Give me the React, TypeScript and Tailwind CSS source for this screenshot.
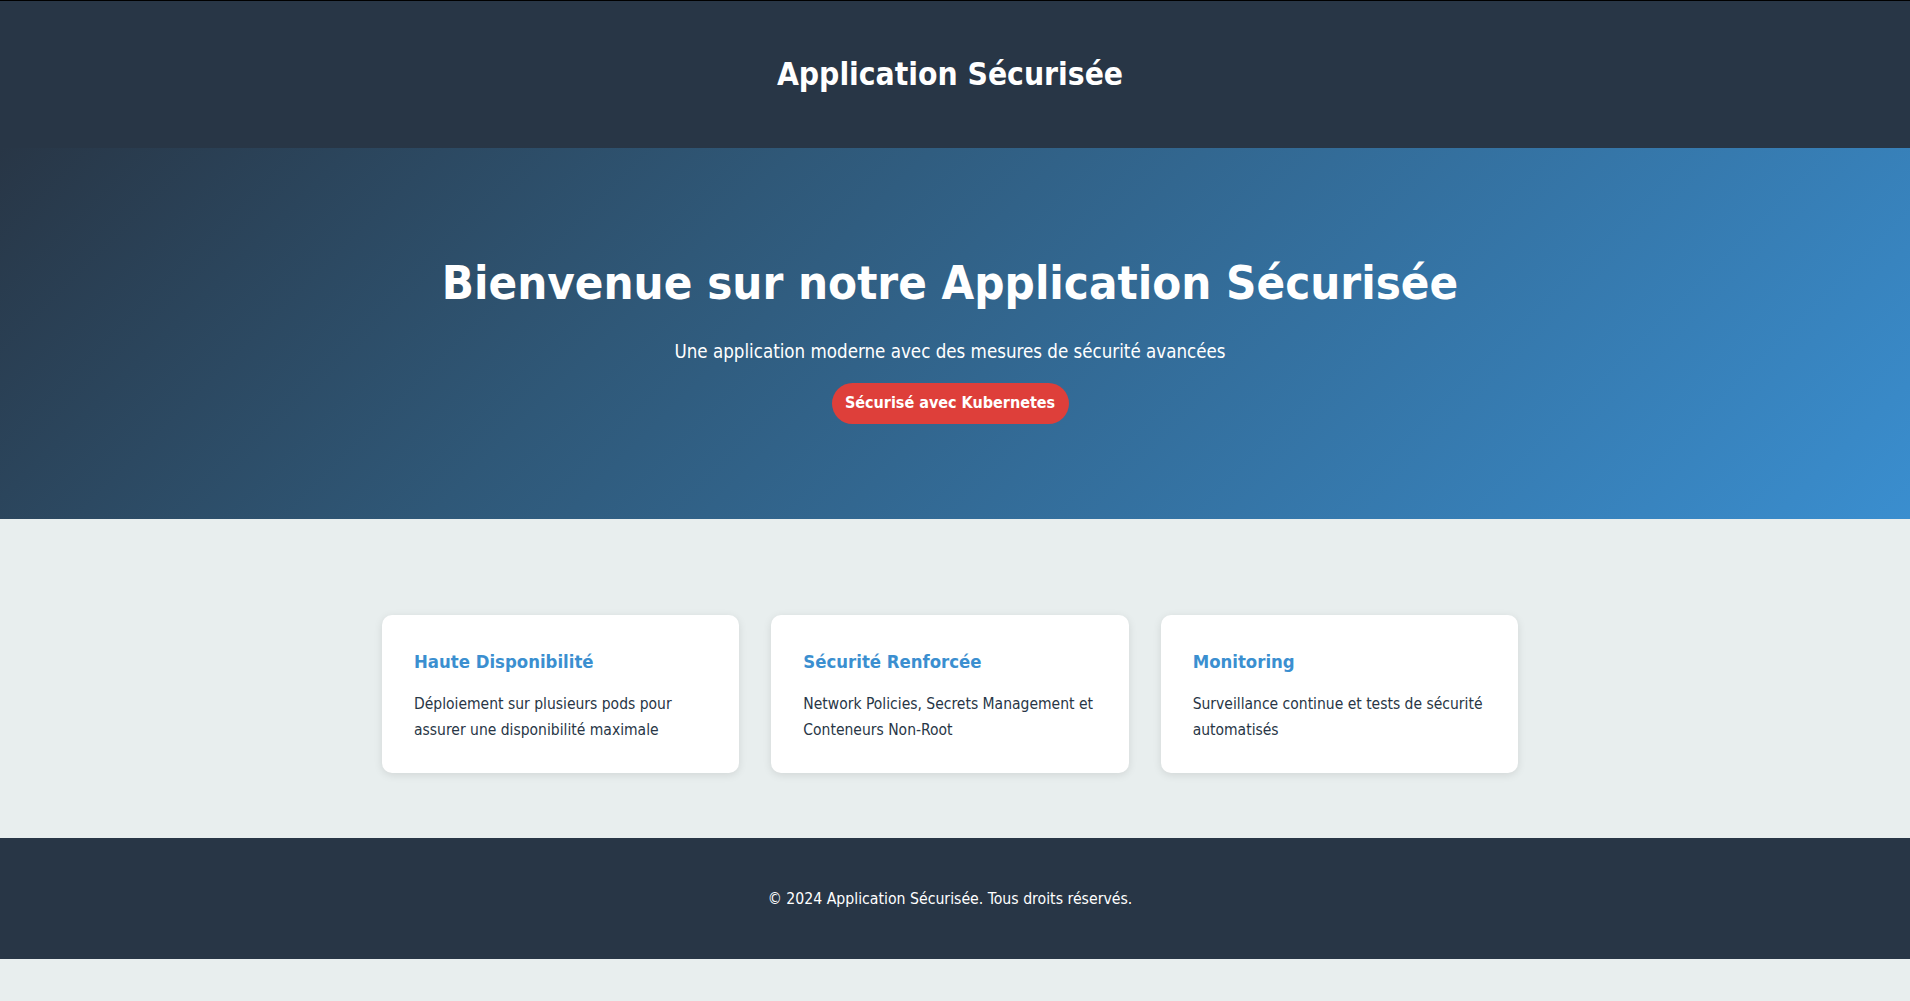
import React from "react";

const features = [
  {
    title: "Haute Disponibilité",
    text: "Déploiement sur plusieurs pods pour assurer une disponibilité maximale",
  },
  {
    title: "Sécurité Renforcée",
    text: "Network Policies, Secrets Management et Conteneurs Non-Root",
  },
  {
    title: "Monitoring",
    text: "Surveillance continue et tests de sécurité automatisés",
  },
];

export default function App() {
  return (
    <div
      className="min-h-screen bg-[#e8eeee] text-[#283646]"
      style={{ fontFamily: '"DejaVu Sans Condensed", "DejaVu Sans", sans-serif' }}
    >
      {/* Header */}
      <header className="h-[148px] bg-[#283646] flex items-center justify-center pr-[10px] border-t border-black">
        <h1 className="text-[31.5px] font-bold text-white leading-none">Application Sécurisée</h1>
      </header>

      {/* Hero */}
      <section className="h-[371px] bg-[linear-gradient(135deg,#283646_0%,#2f5878_35%,#3a8ecf_100%)] flex flex-col items-center pr-[10px] text-white">
        <h2 className="mt-[111px] text-[47px] font-bold leading-none">Bienvenue sur notre Application Sécurisée</h2>
        <p className="mt-[37px] text-[18.6px] leading-none">Une application moderne avec des mesures de sécurité avancées</p>
        <span className="mt-[21px] h-[41px] w-[237px] rounded-full bg-[#de3f3a] flex items-center justify-center text-[16px] font-bold">
          Sécurisé avec Kubernetes
        </span>
      </section>

      {/* Features */}
      <main className="max-w-[1200px] mx-auto -translate-x-[5px] px-8 pt-24 pb-[65px]">
        <div className="grid grid-cols-3 gap-8">
          {features.map((f) => (
            <div key={f.title} className="h-[158px] bg-white rounded-[10px] shadow-[0_2px_8px_rgba(0,0,0,0.1)] px-8 pt-[38px]">
              <h3 className="text-[18.4px] font-bold text-[#3b8fd0] leading-none">{f.title}</h3>
              <p className="mt-[20px] text-[15.5px] leading-[26px] text-[#283646]">{f.text}</p>
            </div>
          ))}
        </div>
      </main>

      {/* Footer */}
      <footer className="h-[121px] bg-[#283646] flex items-center justify-center pr-[10px]">
        <p className="text-[15.7px] text-white">© 2024 Application Sécurisée. Tous droits réservés.</p>
      </footer>
    </div>
  );
}
